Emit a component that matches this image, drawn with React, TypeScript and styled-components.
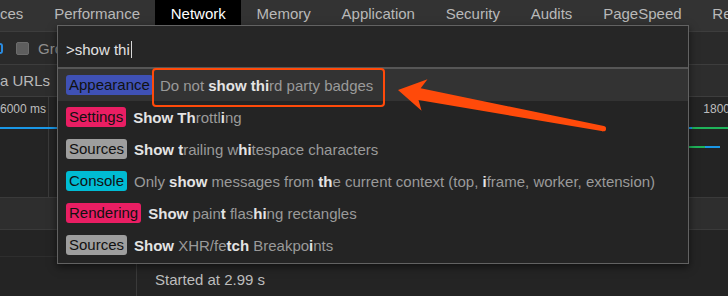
import React from "react";
import styled, { createGlobalStyle } from "styled-components";

const Global = createGlobalStyle`
  html, body { margin: 0; padding: 0; background: #242424; }
  body { font-family: "Liberation Sans", Arial, Helvetica, sans-serif; overflow: hidden; }
  * { box-sizing: border-box; }
`;

const Page = styled.div`
  position: relative;
  width: 728px;
  height: 296px;
  overflow: hidden;
  background: #242424;
  display: flex;
  flex-direction: column;
`;

const TabBar = styled.div`
  height: 32px;
  flex: none;
  display: flex;
  align-items: flex-start;
  background: #333333;
  border-bottom: 1px solid #3d3d3d;
  white-space: nowrap;
`;

const Tab = styled.div<{ $active?: boolean; $first?: boolean }>`
  height: 27px;
  line-height: 28px;
  padding: 0 15.4px;
  padding-left: ${(p) => (p.$first ? "0" : "15.4px")};
  font-size: 15px;
  color: ${(p) => (p.$active ? "#ffffff" : "#b9b9b9")};
  background: ${(p) => (p.$active ? "#000000" : "transparent")};
  flex: none;
`;

const Toolbar = styled.div`
  height: 33px;
  flex: none;
  display: flex;
  align-items: center;
  background: #2a2a2a;
  border-bottom: 1px solid #3d3d3d;
  white-space: nowrap;
`;

const BlueGlyph = styled.span`
  width: 3px;
  height: 11px;
  border: 2px solid #2a8be0;
  border-left: none;
  border-radius: 0 6px 6px 0;
  margin-right: 13px;
`;

const Checkbox = styled.span`
  width: 13px;
  height: 13px;
  border-radius: 2px;
  background: #5e5e5e;
  border: 1px solid #6c6c6c;
  margin-right: 9px;
`;

const ToolLabel = styled.span`
  font-size: 15px;
  color: #8f8f8f;
`;

const FilterBar = styled.div`
  height: 32px;
  flex: none;
  display: flex;
  align-items: center;
  gap: 12px;
  background: #2d2d2d;
  border-bottom: 1px solid #3d3d3d;
  white-space: nowrap;
`;

const FilterText = styled.span`
  font-size: 15px;
  color: #b9b9b9;
`;

const Overview = styled.div`
  position: relative;
  height: 100px;
  flex: none;
  display: flex;
`;

const OverviewCol = styled.div<{ $w: number }>`
  width: ${(p) => p.$w}px;
  flex: none;
  border-right: 1px solid #3a3a3a;
  text-align: right;
  padding: 5px 4px 0 0;
  font-size: 12px;
  color: #bdbdbd;
  white-space: nowrap;
`;

const Chart = styled.svg`
  position: absolute;
  left: 0;
  top: 0;
`;

const GridHeader = styled.div`
  height: 33px;
  flex: none;
  background: #2e2e2e;
  border-top: 1px solid #3a3a3a;
  border-bottom: 1px solid #3a3a3a;
`;

const Details = styled.div`
  flex: 1;
  display: flex;
`;

const DetailsSide = styled.div`
  width: 137px;
  flex: none;
  border-right: 1px solid #3a3a3a;
  display: flex;
  flex-direction: column;
`;

const SideRow = styled.div`
  height: 27px;
  border-bottom: 1px solid #2e2e2e;
`;

const DetailsMain = styled.div`
  flex: 1;
  display: flex;
  align-items: flex-end;
  padding: 0 0 8px 18px;
  font-size: 15px;
  color: #bdbdbd;
`;

const Palette = styled.div`
  position: absolute;
  left: 57px;
  top: 25px;
  width: 632px;
  height: 239px;
  background: #242424;
  border: 1px solid #626262;
  box-shadow: 0 3px 8px rgba(0, 0, 0, 0.55);
  display: flex;
  flex-direction: column;
`;

const InputArea = styled.div`
  height: 43px;
  flex: none;
  display: flex;
  align-items: center;
  padding: 6px 8px 0;
  background: #262626;
  border-bottom: 2px solid #565656;
  font-size: 15px;
  color: #e2e2e2;
`;

const Caret = styled.span`
  display: inline-block;
  width: 1px;
  height: 17px;
  background: #d8d8d8;
  margin-left: 1px;
`;

const List = styled.div`
  display: flex;
  flex-direction: column;
`;

const Row = styled.div<{ $selected?: boolean }>`
  height: 32px;
  display: flex;
  align-items: center;
  padding: 0 8px;
  background: ${(p) => (p.$selected ? "#333333" : "transparent")};
  white-space: nowrap;
  font-size: 15px;
`;

const Badge = styled.span<{ $bg: string }>`
  background: ${(p) => p.$bg};
  color: #111;
  border-radius: 3px;
  padding: 0 3px;
  height: 20px;
  line-height: 20px;
  margin-right: 7px;
  flex: none;
`;

const Text = styled.span`
  color: #9a9a9a;
`;

const Match = styled.b`
  color: #e4e4e4;
  font-weight: 700;
`;

const Highlight = styled.div`
  position: absolute;
  left: 152px;
  top: 68px;
  width: 233px;
  height: 39px;
  border: 2px solid #ff4a0a;
  border-radius: 4px;
`;

const Arrow = styled.svg`
  position: absolute;
  left: 0;
  top: 0;
  pointer-events: none;
`;

type Seg = [string, boolean];
const commands: { cat: string; color: string; segs: Seg[] }[] = [
  {
    cat: "Appearance",
    color: "#3f51b5",
    segs: [["Do not ", false], ["show thi", true], ["rd party badges", false]],
  },
  {
    cat: "Settings",
    color: "#e91e63",
    segs: [["Show Th", true], ["rottl", false], ["i", true], ["ng", false]],
  },
  {
    cat: "Sources",
    color: "#9e9e9e",
    segs: [["Show t", true], ["railing w", false], ["hi", true], ["tespace characters", false]],
  },
  {
    cat: "Console",
    color: "#00bcd4",
    segs: [
      ["Only ", false],
      ["show", true],
      [" messages from ", false],
      ["th", true],
      ["e current context (top, ", false],
      ["i", true],
      ["frame, worker, extension)", false],
    ],
  },
  {
    cat: "Rendering",
    color: "#e91e63",
    segs: [["Show", true], [" pain", false], ["t", true], [" flas", false], ["hi", true], ["ng rectangles", false]],
  },
  {
    cat: "Sources",
    color: "#9e9e9e",
    segs: [["Show", true], [" XHR/fe", false], ["tch", true], [" Breakpo", false], ["i", true], ["nts", false]],
  },
];

const tabs = ["ces", "Performance", "Network", "Memory", "Application", "Security", "Audits", "PageSpeed", "Remote"];

// arrow geometry along axis from tip
const tip = [398, 90];
const u = [0.983, 0.185];
const n = [0.185, -0.983];
const pt = (a: number, p: number) =>
  `${(tip[0] + a * u[0] + p * n[0]).toFixed(1)},${(tip[1] + a * u[1] + p * n[1]).toFixed(1)}`;
const arrowPts = [
  pt(0, 0),
  pt(27, 16),
  pt(22, 6),
  pt(209, 2.6),
  pt(209, -2.6),
  pt(22, -6),
  pt(27, -16),
].join(" ");
const tailX = tip[0] + 209 * u[0];
const tailY = tip[1] + 209 * u[1];

export default function App() {
  return (
    <>
      <Global />
      <Page>
        <TabBar>
          {tabs.map((t, i) => (
            <Tab key={t} $first={i === 0} $active={t === "Network"}>
              {t}
            </Tab>
          ))}
        </TabBar>
        <Toolbar>
          <BlueGlyph />
          <Checkbox />
          <ToolLabel>Group by frame</ToolLabel>
        </Toolbar>
        <FilterBar>
          <FilterText>a URLs</FilterText>
          <FilterText>All</FilterText>
        </FilterBar>
        <Overview>
          <OverviewCol $w={49}>6000 ms</OverviewCol>
          <OverviewCol $w={356}>12000 ms</OverviewCol>
          <OverviewCol $w={356}>18000 ms</OverviewCol>
          <Chart width={728} height={100}>
            <rect x={0} y={30} width={692} height={2} fill="#1a97e6" />
            <rect x={692} y={30} width={36} height={2} fill="#1fb35a" />
            <rect x={600} y={49} width={105} height={2} fill="#1fb35a" />
            <rect x={705} y={49} width={15} height={2} fill="#1a97e6" />
          </Chart>
        </Overview>
        <GridHeader />
        <Details>
          <DetailsSide>
            <SideRow />
          </DetailsSide>
          <DetailsMain>Started at 2.99 s</DetailsMain>
        </Details>

        <Palette>
          <InputArea>
            &gt;show thi
            <Caret />
          </InputArea>
          <List>
            {commands.map((c, i) => (
              <Row key={i} $selected={i === 0}>
                <Badge $bg={c.color}>{c.cat}</Badge>
                <Text>
                  {c.segs.map(([s, b], j) => (b ? <Match key={j}>{s}</Match> : <React.Fragment key={j}>{s}</React.Fragment>))}
                </Text>
              </Row>
            ))}
          </List>
        </Palette>

        <Highlight />
        <Arrow width={728} height={296}>
          <polygon points={arrowPts} fill="#ff4a0a" />
          <circle cx={tailX} cy={tailY} r={2.6} fill="#ff4a0a" />
        </Arrow>
      </Page>
    </>
  );
}
